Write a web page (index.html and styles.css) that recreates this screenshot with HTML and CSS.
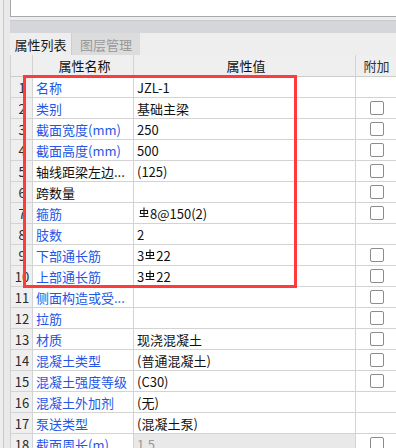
FILE: index.html
```html
<!DOCTYPE html>
<html lang="zh-CN">
<head>
<meta charset="utf-8">
<title>属性列表</title>
<link rel="stylesheet" href="styles.css">
</head>
<body>
<div class="page">
  <div class="side"></div>
  <div class="main">
    <div class="preview"></div>
    <div class="band"></div>
    <div class="tabs">
      <div class="tab active">属性列表</div>
      <div class="tab">图层管理</div>
    </div>
    <div class="grid">
      <div class="row head">
        <div class="c num"></div>
        <div class="c name">属性名称</div>
        <div class="c val">属性值</div>
        <div class="c add">附加</div>
      </div>
      <div class="row"><div class="c num">1</div><div class="c name blue">名称</div><div class="c val">JZL-1</div><div class="c add"></div></div>
      <div class="row"><div class="c num">2</div><div class="c name blue">类别</div><div class="c val">基础主梁</div><div class="c add"><span class="cb"></span></div></div>
      <div class="row"><div class="c num">3</div><div class="c name blue">截面宽度(mm)</div><div class="c val">250</div><div class="c add"><span class="cb"></span></div></div>
      <div class="row"><div class="c num">4</div><div class="c name blue">截面高度(mm)</div><div class="c val">500</div><div class="c add"><span class="cb"></span></div></div>
      <div class="row"><div class="c num">5</div><div class="c name">轴线距梁左边...</div><div class="c val">(125)</div><div class="c add"><span class="cb"></span></div></div>
      <div class="row"><div class="c num">6</div><div class="c name">跨数量</div><div class="c val"></div><div class="c add"><span class="cb"></span></div></div>
      <div class="row"><div class="c num">7</div><div class="c name blue">箍筋</div><div class="c val"><svg class="bar ind" viewBox="0 0 10 11" width="10" height="11"><path d="M5 0.5V9.5M1.5 3.5h7v3h-7z M0.5 9.5h9" fill="none" stroke="#111" stroke-width="1.1"/></svg>8@150(2)</div><div class="c add"><span class="cb"></span></div></div>
      <div class="row"><div class="c num">8</div><div class="c name blue">肢数</div><div class="c val">2</div><div class="c add"></div></div>
      <div class="row"><div class="c num">9</div><div class="c name blue">下部通长筋</div><div class="c val">3<svg class="bar" viewBox="0 0 10 11" width="10" height="11"><path d="M5 0.5V9.5M1.5 3.5h7v3h-7z M0.5 9.5h9" fill="none" stroke="#111" stroke-width="1.1"/></svg>22</div><div class="c add"><span class="cb"></span></div></div>
      <div class="row"><div class="c num">10</div><div class="c name blue">上部通长筋</div><div class="c val">3<svg class="bar" viewBox="0 0 10 11" width="10" height="11"><path d="M5 0.5V9.5M1.5 3.5h7v3h-7z M0.5 9.5h9" fill="none" stroke="#111" stroke-width="1.1"/></svg>22</div><div class="c add"><span class="cb"></span></div></div>
      <div class="row"><div class="c num">11</div><div class="c name blue">侧面构造或受...</div><div class="c val"></div><div class="c add"><span class="cb"></span></div></div>
      <div class="row"><div class="c num">12</div><div class="c name blue">拉筋</div><div class="c val"></div><div class="c add"><span class="cb"></span></div></div>
      <div class="row"><div class="c num">13</div><div class="c name blue">材质</div><div class="c val">现浇混凝土</div><div class="c add"><span class="cb"></span></div></div>
      <div class="row"><div class="c num">14</div><div class="c name blue">混凝土类型</div><div class="c val">(普通混凝土)</div><div class="c add"><span class="cb"></span></div></div>
      <div class="row"><div class="c num">15</div><div class="c name blue">混凝土强度等级</div><div class="c val">(C30)</div><div class="c add"><span class="cb"></span></div></div>
      <div class="row"><div class="c num">16</div><div class="c name blue">混凝土外加剂</div><div class="c val">(无)</div><div class="c add"></div></div>
      <div class="row"><div class="c num">17</div><div class="c name blue">泵送类型</div><div class="c val">(混凝土泵)</div><div class="c add"></div></div>
      <div class="row"><div class="c num">18</div><div class="c name blue">截面周长(m)</div><div class="c val ro">1.5</div><div class="c add"><span class="cb"></span></div></div>
    </div>
  </div>
  <div class="highlight"></div>
</div>
</body>
</html>
```

FILE: styles.css
```css
* { box-sizing: border-box; }
html, body { margin: 0; padding: 0; }
body {
  width: 396px;
  height: 448px;
  overflow: hidden;
  background: #ededed;
  font-family: "Noto Sans CJK SC", "Noto Sans", sans-serif;
  font-size: 13px;
  color: #111;
}
.page {
  position: relative;
  display: flex;
  width: 396px;
  height: 448px;
  overflow: hidden;
}
.side {
  width: 7px;
  margin-left: 3px;
  border-left: 1px solid #c9c9c9;
  background: #e9e9e9;
  flex: none;
}
.main {
  flex: 1;
  display: flex;
  flex-direction: column;
  min-width: 0;
}
.preview {
  height: 17px;
  background: #fff;
  border-left: 1px solid #a9a9a9;
  border-bottom: 1px solid #a9a9a9;
  margin-bottom: 3px;
  flex: none;
}
.band {
  height: 13px;
  background: #d4d6da;
  border-top: 1px solid #c8cacd;
  flex: none;
}
.tabs {
  height: 22px;
  display: flex;
  background: #eeeeee;
  flex: none;
}
.tab {
  display: flex;
  align-items: center;
  justify-content: center;
  color: #999;
  background: #dcdcdc;
  width: 69px;
  border-left: 1px solid #cfcfcf;
  line-height: 1;
}
.tab.active {
  width: 61px;
  color: #1a1a1a;
  background: #eeeeee;
  border-left: 0;
}
.grid {
  display: flex;
  flex-direction: column;
}
.row {
  display: grid;
  grid-template-columns: 23px 101px 222px 40px;
  height: 21px;
}
.row.head {
  height: 22px;
  background: #efefef;
}
.c {
  border-right: 1px solid #d3d3d3;
  border-bottom: 1px solid #d3d3d3;
  display: flex;
  align-items: center;
  white-space: nowrap;
  overflow: hidden;
  line-height: 1;
  background: #fff;
}
.head .c {
  background: #efefef;
  justify-content: center;
  color: #333;
  border-bottom-color: #cccccc;
}
.c.num {
  border-left: 1px solid #d0d0d0;
  background: #efefef;
  justify-content: center;
  color: #2a2a2a;
  padding-left: 1px;
}
.c.name { padding-left: 3px; color: #111; }
.c.name.blue { color: #2356e6; }
.c.val { padding-left: 3px; color: #111; }
.c.val.ro { background: #e9e9e9; color: #9a9a9a; }
.c.add { justify-content: center; border-right: 0; padding-left: 1px; }
.cb {
  display: block;
  width: 14px;
  height: 14px;
  border: 1px solid #8c8c8c;
  border-radius: 2px;
  background: #fff;
}
.bar {
  display: inline-block;
  margin: 0 1px 1px 1px;
  flex: none;
}
.bar.ind { margin-left: 2px; }
.highlight {
  position: absolute;
  left: 23px;
  top: 75px;
  width: 274px;
  height: 213px;
  border: 3px solid #ff3b3b;
  pointer-events: none;
}
```
